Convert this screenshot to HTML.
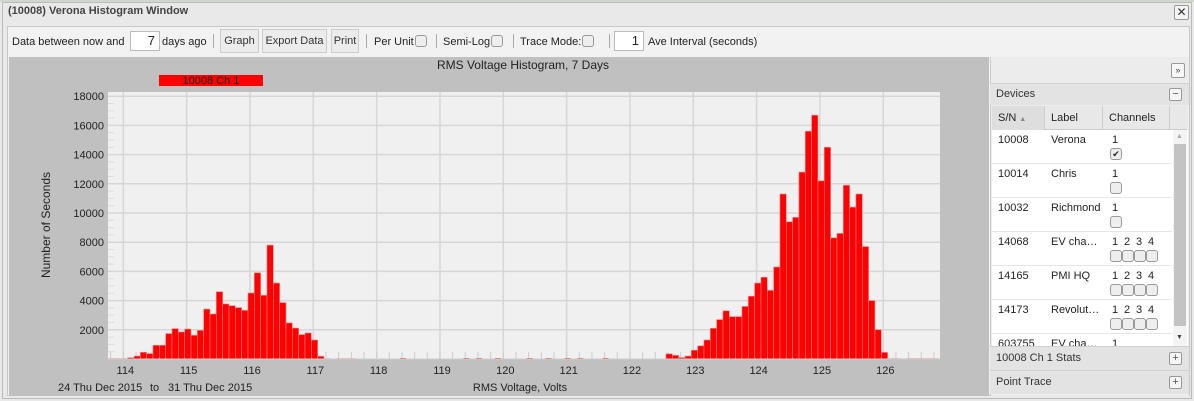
<!DOCTYPE html>
<html><head><meta charset="utf-8">
<style>
*{box-sizing:border-box;margin:0;padding:0}
body{width:1194px;height:401px;overflow:hidden;background:#e9e9e9;font-family:"Liberation Sans",sans-serif;font-size:11px;color:#222;position:relative}
.a{position:absolute}
.btn{position:absolute;top:29px;height:24px;border:1px solid #ccc;background:#ececec;line-height:22px;text-align:center;font-size:11px;color:#333}
.cb{display:inline-block;width:12px;height:12px;border:1px solid #999;border-radius:3px;background:#eee;vertical-align:middle}
.sep{position:absolute;top:34px;width:1px;height:14px;background:#aaa}
.inp{position:absolute;top:31px;height:20px;background:#fff;border:1px solid #bbb;text-align:right;padding-right:4px;line-height:18px;font-size:13px}
.hdr{position:absolute;left:990px;width:199px;background:#e3e3e3;border-top:1px solid #d0d0d0;padding-left:6px;font-size:11px;color:#333}
.pb{position:absolute;right:7px;width:13px;height:13px;border:1px solid #999;border-radius:2px;background:#f5f5f5;font-size:11px;line-height:10px;text-align:center;color:#555}
</style></head><body>
<div class="a" style="left:0;top:0;width:1194px;height:2px;background:#cfd8cf"></div>
<div class="a" style="left:2px;top:2px;width:1190px;height:397px;border:1px solid #bbb;background:#e9e9e9"></div>
<div class="a" style="left:8px;top:5px;font-weight:bold;color:#444;font-size:11px">(10008) Verona Histogram Window</div>
<div class="a" style="left:1174px;top:5px;width:15px;height:15px;border:1px solid #999;border-radius:2px;background:#f4f4f4;text-align:center;line-height:13px;font-size:12px;color:#333">✕</div>
<div class="a" style="left:7px;top:26px;width:1183px;height:370px;border:1px solid #c8c8c8;background:#f2f2f2"></div>
<div class="a" style="left:12px;top:36px">Data between now and</div>
<div class="inp" style="left:130px;width:30px">7</div>
<div class="a" style="left:162px;top:36px">days ago</div>
<div class="sep" style="left:213px"></div>
<div class="btn" style="left:220px;width:39px">Graph</div>
<div class="btn" style="left:262px;width:65px">Export Data</div>
<div class="btn" style="left:331px;width:28px">Print</div>
<div class="sep" style="left:366px"></div>
<div class="a" style="left:374px;top:36px">Per Unit<span class="cb" style="margin-left:1px;margin-top:-3px"></span></div>
<div class="sep" style="left:436px"></div>
<div class="a" style="left:443px;top:36px">Semi-Log<span class="cb" style="margin-left:1px;margin-top:-3px"></span></div>
<div class="sep" style="left:513px"></div>
<div class="a" style="left:520px;top:36px">Trace Mode:<span class="cb" style="margin-left:1px;margin-top:-3px"></span></div>
<div class="sep" style="left:609px"></div>
<div class="inp" style="left:614px;width:30px">1</div>
<div class="a" style="left:648px;top:36px">Ave Interval (seconds)</div>

<div class="a" style="left:9px;top:57px;width:980px;height:339px;background:#c0c0c0"></div>
<svg class="a" style="left:0;top:0" width="1194" height="401" id="s">
<text x="523" y="69" font-size="12" text-anchor="middle" fill="#222" font-family="Liberation Sans">RMS Voltage Histogram, 7 Days</text>
<rect x="159" y="75" width="104" height="11" fill="#f00"/>
<text x="211" y="84" font-size="11" text-anchor="middle" fill="#222" font-family="Liberation Sans">10008 Ch 1</text>
<rect x="108" y="92" width="832" height="267" fill="#f0f0f0"/>
<g id="g"></g>
<text x="50" y="225" font-size="12" fill="#222" text-anchor="middle" transform="rotate(-90 50 225)" font-family="Liberation Sans">Number of Seconds</text>
<text x="520" y="391" font-size="11" fill="#222" text-anchor="middle" font-family="Liberation Sans">RMS Voltage, Volts</text>
<text x="58" y="391" font-size="11" fill="#222" font-family="Liberation Sans">24 Thu Dec 2015</text>
<text x="150" y="391" font-size="11" fill="#222" font-family="Liberation Sans">to</text>
<text x="168" y="391" font-size="11" fill="#222" font-family="Liberation Sans">31 Thu Dec 2015</text>
</svg>

<div class="a" style="left:990px;top:57px;width:199px;height:339px;background:#ececec;border-left:1px solid #ccc"></div>
<div class="a" style="left:1171px;top:63px;width:14px;height:15px;border:1px solid #999;border-radius:2px;background:#f8f8f8;font-size:9px;text-align:center;line-height:13px;color:#444">&raquo;</div>
<div class="hdr" style="top:83px;height:22px;line-height:21px">Devices<div class="pb" style="top:4px">−</div></div>
<div class="a" style="left:992px;top:106px;width:195px;height:24px;background:#e8e8e8;border-bottom:1px solid #ccc"></div>
<div class="a" style="left:992px;top:106px;width:53px;height:24px;background:#dedede;border-right:1px solid #ccc;padding:6px 0 0 6px">S/N <span style="font-size:7px;color:#888">▲</span></div>
<div class="a" style="left:1046px;top:106px;width:57px;height:24px;border-right:1px solid #ccc;padding:6px 0 0 5px">Label</div>
<div class="a" style="left:1104px;top:106px;width:66px;height:24px;border-right:1px solid #ccc;padding:6px 0 0 5px">Channels</div>
<div class="a" style="left:992px;top:130px;width:196px;height:217px;background:#fff;overflow:hidden" id="rows"></div>
<div class="a" style="left:1173px;top:130px;width:14px;height:217px;background:#f4f4f4"></div>
<div class="a" style="left:1174px;top:144px;width:12px;height:182px;background:#c3c3c3;border-radius:1px"></div>
<div class="a" style="left:1176px;top:133px;font-size:7px;color:#aaa">▲</div>
<div class="a" style="left:1176px;top:334px;font-size:7px;color:#444">▼</div>
<div class="hdr" style="top:346px;height:24px;line-height:23px">10008 Ch 1 Stats<div class="pb" style="top:5px">+</div></div>
<div class="hdr" style="top:370px;height:24px;line-height:23px">Point Trace<div class="pb" style="top:5px">+</div></div>

<script>
var NS="http://www.w3.org/2000/svg",g=document.getElementById('g');
function el(t,a){var e=document.createElementNS(NS,t);for(var k in a)e.setAttribute(k,a[k]);g.appendChild(e);return e;}
function X(v){return 693.3+(v-123)*63.33;}
function Y(c){return 359-c/2000*29.2;}
for(var c=2000;c<=18000;c+=2000){el('line',{x1:108,x2:940,y1:Y(c),y2:Y(c),stroke:'#d6d6d6','stroke-width':1.5});
 var t=el('text',{x:104,y:Y(c)+4,'font-size':11,'text-anchor':'end',fill:'#222','font-family':'Liberation Sans'});t.textContent=c;}
for(var c=500;c<18000;c+=500){if(c%2000)el('line',{x1:108,x2:114,y1:Y(c),y2:Y(c),stroke:'#ddd','stroke-width':1});}
for(var v=114;v<=126;v++){el('line',{x1:X(v),x2:X(v),y1:92,y2:359,stroke:'#d6d6d6','stroke-width':1.5});
 var t=el('text',{x:X(v)+2,y:374,'font-size':11,'text-anchor':'middle',fill:'#222','font-family':'Liberation Sans'});t.textContent=v;}
for(var v=113.8;v<126.9;v+=0.2){el('line',{x1:X(v),x2:X(v),y1:352,y2:359,stroke:'#ccc','stroke-width':1});}
var L=[30,30,30,90,200,460,370,940,940,1740,2080,1850,2050,1620,1960,3420,3080,4610,3770,3650,3520,3330,4520,5900,4360,7800,5200,3860,2470,2120,1670,1780,1300,180,30,0,30,30,30];
var R=[350,250,100,200,600,900,1300,2100,2700,3300,2900,2900,3600,4300,5200,5600,4700,6300,11300,9400,9700,12800,15600,16700,12200,14500,8300,8600,11900,10400,11300,7700,4000,2000,450,30,30,0,30,30,30,30,30];
function bars(arr,s){for(var i=0;i<arr.length;i++){if(!arr[i])continue;var v=s+i*0.1;var x=X(v)-2;
 el('rect',{x:x,y:Y(arr[i]),width:6.33,height:359-Y(arr[i]),fill:'#ff0000',stroke:'#ff8080','stroke-width':0.6});}}
bars(L,113.8);bars(R,122.6);
[118.4,119.4,119.6,119.9,120.4,120.7,121.0,121.2,121.6].forEach(function(v){el('rect',{x:X(v)-2,y:358,width:6,height:1,fill:'#f44'});});
el('line',{x1:108,x2:940,y1:359,y2:359,stroke:'#ccc','stroke-width':1});
var rows=[["10008","Verona",1,1],["10014","Chris",1,0],["10032","Richmond",1,0],["14068","EV cha…",4,0],["14165","PMI HQ",4,0],["14173","Revolut…",4,0],["603755","EV cha…",1,0]];
var h='';rows.forEach(function(r,i){var t=i*34;h+='<div style="position:absolute;left:0;top:'+t+'px;width:180px;height:34px;border-bottom:1px solid #e6e6e6">'+
'<span style="position:absolute;left:6px;top:4px">'+r[0]+'</span><span style="position:absolute;left:59px;top:4px">'+r[1]+'</span>';
for(var k=0;k<r[2];k++)h+='<span style="position:absolute;left:'+(120+k*12)+'px;top:4px">'+(k+1)+'</span>';
for(var k=0;k<r[2];k++)h+='<span class="cb" style="position:absolute;left:'+(118+k*12)+'px;top:18px;font-size:9px;line-height:10px;text-align:center">'+(r[3]?'✔':'')+'</span>';
h+='</div>';});document.getElementById('rows').innerHTML=h;
</script>
</body></html>
